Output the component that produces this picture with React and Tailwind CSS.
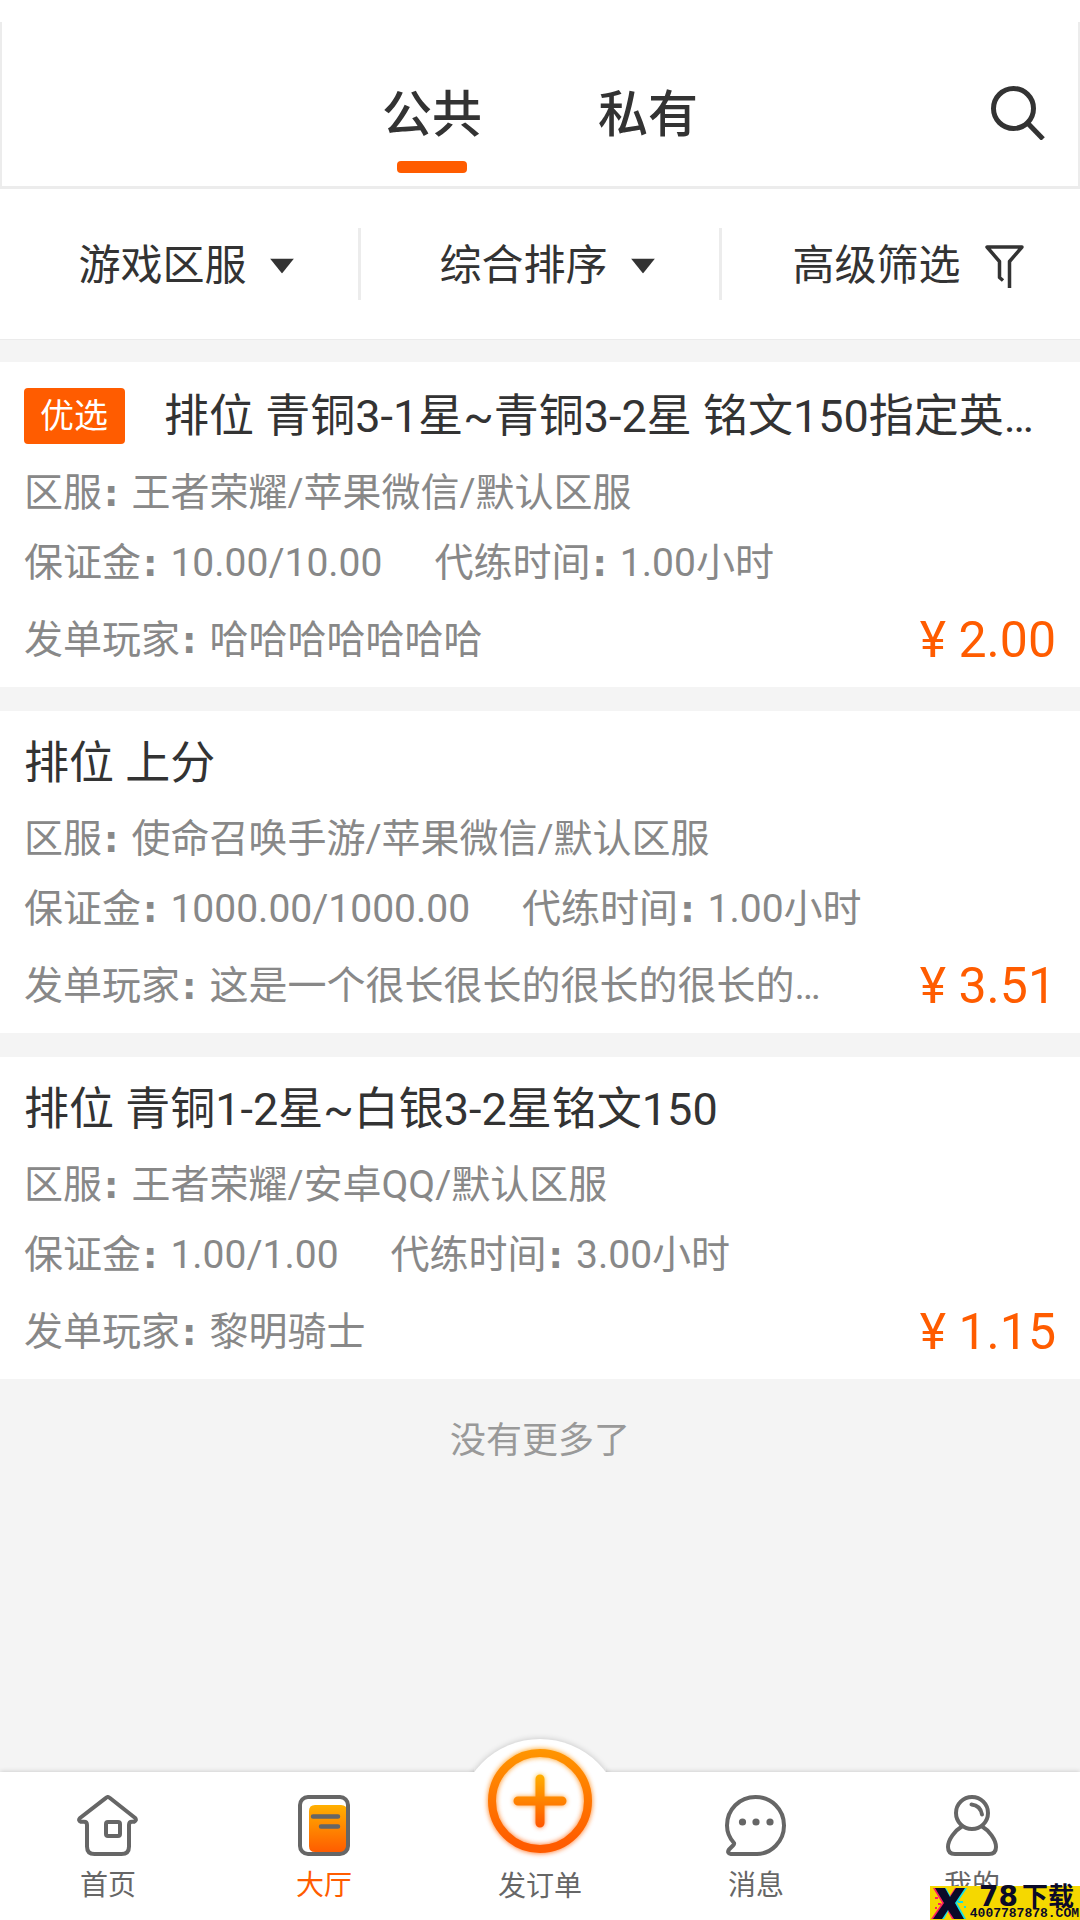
const orders = [
  {
    id: 1,
    featured: true,
    title: "排位 青铜3-1星~青铜3-2星 铭文150指定英…",
    region: "王者荣耀/苹果微信/默认区服",
    deposit: "10.00/10.00",
    time: "1.00小时",
    player: "哈哈哈哈哈哈哈",
    price: "2.00",
  },
  {
    id: 2,
    title: "排位 上分",
    region: "使命召唤手游/苹果微信/默认区服",
    deposit: "1000.00/1000.00",
    time: "1.00小时",
    player: "这是一个很长很长的很长的很长的…",
    price: "3.51",
  },
  {
    id: 3,
    title: "排位 青铜1-2星~白银3-2星铭文150",
    region: "王者荣耀/安卓QQ/默认区服",
    deposit: "1.00/1.00",
    time: "3.00小时",
    player: "黎明骑士",
    price: "1.15",
  },
];

function SearchIcon() {
  return (
    <svg className="size-[54px]" viewBox="0 0 54 54" fill="none" stroke="#333" strokeWidth="5">
      <circle cx="22.5" cy="22.5" r="20" />
      <path d="M37 37.5L52 53" />
    </svg>
  );
}

function FunnelIcon() {
  return (
    <svg className="h-[43px] w-[39px]" viewBox="0 0 39 43" fill="none" stroke="#333" strokeWidth="3.5">
      <path d="M18 35.5L14.5 32.5V16.5L2 2H37L24.5 16.5V43" strokeLinejoin="round" />
    </svg>
  );
}

function HomeIcon() {
  return (
    <svg className="h-[61px] w-[62px]" viewBox="0 0 62 61" fill="none" stroke="#666" strokeWidth="4" strokeLinejoin="round">
      <path d="M29 2.8Q30.8 1.3 32.6 2.8L58.2 23Q60 25.5 57 26.8H55Q52 26.8 52 30V51.5Q52 59 44.5 59H17.5Q10 59 10 51.5V30Q10 26.8 7 26.8H4Q0.8 25.5 3 23Z" />
      <rect x="29" y="27" width="14" height="14" rx="2" />
    </svg>
  );
}

function HallIcon() {
  return (
    <svg className="h-[61px] w-[52px]" viewBox="0 0 52 61" fill="none">
      <defs>
        <linearGradient id="hall-page" x1="0" y1="0" x2="0" y2="1">
          <stop offset="0" stopColor="#ffb000" />
          <stop offset="1" stopColor="#ff5c00" />
        </linearGradient>
      </defs>
      <path d="M17 10H43Q49 10 49 16V57H17Q11 57 11 51V16Q11 10 17 10Z" fill="url(#hall-page)" />
      <rect x="2" y="2" width="48" height="57" rx="8" stroke="#666" strokeWidth="4" />
      <path d="M15 21.5H40M23 31.5H40" stroke="#666" strokeWidth="4.5" strokeLinecap="round" />
    </svg>
  );
}

function MessageIcon() {
  return (
    <svg className="h-[61px] w-[62px]" viewBox="0 0 62 61" fill="none">
      <path
        d="M9 48C4.5 43 2 37 2 30.5C2 14.5 14.5 2 30.5 2S59 14.5 59 30.5S46 59 32 59H6Q1.5 58 4 54.5L8 50.5Q9.5 49 9 48Z"
        stroke="#666"
        strokeWidth="4"
        strokeLinejoin="round"
      />
      <g fill="#666">
        <circle cx="17.5" cy="27" r="3.6" />
        <circle cx="31" cy="27" r="3.6" />
        <circle cx="45" cy="27" r="3.6" />
      </g>
    </svg>
  );
}

function MineIcon() {
  return (
    <svg className="h-[61px] w-[52px]" viewBox="0 0 52 61" fill="none" stroke="#666" strokeWidth="4">
      <circle cx="26" cy="18" r="16" />
      <path d="M25.5 9.5Q34.5 10.5 36 19.5" strokeLinecap="round" />
      <path d="M16.5 31C9 35.5 2 44.5 2 52Q2 59 9 59H43Q50 59 50 52C50 44.5 43 35.5 35.5 31" />
    </svg>
  );
}

function PublishIcon() {
  return (
    <svg className="size-[120px]" viewBox="0 0 120 120" fill="none">
      <defs>
        <linearGradient id="publish" gradientUnits="userSpaceOnUse" x1="0" y1="8" x2="0" y2="112">
          <stop offset="0" stopColor="#ff9600" />
          <stop offset="0.9" stopColor="#ff5c00" />
        </linearGradient>
        <linearGradient id="publish-plus" gradientUnits="userSpaceOnUse" x1="0" y1="33" x2="0" y2="87">
          <stop offset="0" stopColor="#ffb000" />
          <stop offset="1" stopColor="#ff5500" />
        </linearGradient>
        <filter id="publish-glow" x="-20%" y="-20%" width="140%" height="140%">
          <feGaussianBlur stdDeviation="2.5" />
        </filter>
      </defs>
      <g filter="url(#publish-glow)" opacity="0.8" strokeWidth="9" strokeLinecap="round">
        <circle cx="60" cy="60" r="48" stroke="url(#publish)" />
        <path d="M60 38V82M38 60H82" stroke="url(#publish-plus)" />
      </g>
      <circle cx="60" cy="60" r="48" stroke="url(#publish)" strokeWidth="8" />
      <path d="M60 38V82M38 60H82" stroke="url(#publish-plus)" strokeWidth="9" strokeLinecap="round" />
    </svg>
  );
}

function Tab({ active, children }) {
  return (
    <button type="button" role="tab" aria-selected={active} className="flex w-[216px] flex-col items-center gap-4">
      <span className="text-[50px] leading-[60px] font-medium">{children}</span>
      <span className={active ? "h-3 w-[70px] rounded-[4px] bg-[#ff5c00]" : "h-3 w-[70px]"} />
    </button>
  );
}

function FilterSelect({ name }) {
  return (
    <div className="flex h-[72px] flex-1 items-center justify-center border-r-[3px] border-[#ececec] pt-1 pl-[14px]">
      <div className="relative">
        <select aria-label={name} className="block appearance-none bg-transparent pr-[46px] text-[42px] leading-[60px]">
          <option>{name}</option>
        </select>
        <svg className="pointer-events-none absolute top-1/2 right-0 h-[15px] w-6 -translate-y-1/2" viewBox="0 0 24 15" fill="#333">
          <path d="M0 0H24L12 15Z" />
        </svg>
      </div>
    </div>
  );
}

function Field({ label, children }) {
  return (
    <span className="whitespace-nowrap">
      {label}
      <span className="mr-[13px] ml-0.5 font-['DejaVu_Sans',sans-serif] text-[36px] leading-none font-bold">:</span>
      {children}
    </span>
  );
}

function OrderCard({ order }) {
  return (
    <article className="bg-white px-6 pt-6 pb-[23px] text-[39px] leading-[48px] text-[#888]">
      <div className="flex items-center">
        {order.featured && (
          <span className="mt-0.5 mr-[39px] mb-[3px] shrink-0 rounded-[4px] bg-[#ff5c00] pr-[17px] pl-4 text-[34px] leading-[56px] text-white">
            优选
          </span>
        )}
        <h2 className="truncate text-[45px] leading-[58px] text-[#333]">{order.title}</h2>
      </div>
      <p className="mt-[22px]">
        <Field label="区服">{order.region}</Field>
      </p>
      <p className="mt-[22px] flex gap-[52px]">
        <Field label="保证金">{order.deposit}</Field>
        <Field label="代练时间">{order.time}</Field>
      </p>
      <div className="mt-[29px] flex items-center justify-between">
        <p><Field label="发单玩家">{order.player}</Field></p>
        <strong className="text-[50px] font-normal whitespace-nowrap text-[#ff5c00]">¥ {order.price}</strong>
      </div>
    </article>
  );
}

function NavItem({ icon, label, active }) {
  return (
    <a href="#" className={active ? "flex flex-1 flex-col items-center pt-7 text-[#ff5c00]" : "flex flex-1 flex-col items-center pt-7"}>
      {icon}
      <span className="mt-2.5 text-[28px] leading-[40px]">{label}</span>
    </a>
  );
}

function SiteBadge() {
  return (
    <div className="absolute right-0 bottom-0 flex h-[34px] w-[150px] bg-[#f5d800] text-[#0a0a28]">
      <svg className="h-[34px] w-[38px] shrink-0" viewBox="0 0 38 34">
        <path d="M3 2H13L19 11L25 2H34L24 17L33 33H22L17 24L11 33H1L12 17Z" fill="#ff2060" />
        <path d="M7 2H16L21 11L28 2H37L27 17L36 33H25L19 24L14 33H5L15 17Z" fill="#10e0e8" />
        <path d="M5 2H15L20 11L26 2H35L25 17L34 33H24L18 24L12 33H3L14 17Z" fill="#0a0a28" />
        <path d="M5 11H8V13H5ZM8 17H11V19H8ZM5 21H7V23H5Z" fill="#ff2060" />
        <path d="M28 15H33V17H28ZM34 20H36V22H34Z" fill="#10e0e8" />
      </svg>
      <div className="flex flex-1 flex-col items-end whitespace-nowrap">
        <span className="flex items-center gap-1 pr-1.5 text-[26px] leading-[22px] font-bold">
          <span className="font-['DejaVu_Sans',sans-serif] text-[28px]">78</span>
          下载
        </span>
        <span className="pr-px font-['Liberation_Mono',monospace] text-[13px] leading-[12px] font-bold">4007787878.COM</span>
      </div>
    </div>
  );
}

function BottomNav() {
  return (
    <nav className="relative mt-auto flex h-[153px] text-[#666]">
      {/* Raised dome sits behind the bar, its lower half hidden by it */}
      <div className="absolute top-[-28px] left-1/2 size-[164px] -translate-x-1/2 rounded-full bg-white shadow-[0_0_6px_rgba(0,0,0,0.2)]" />
      <div className="absolute inset-x-0 top-[5px] bottom-0 bg-white shadow-[0_0_5px_rgba(0,0,0,0.2)] [clip-path:polygon(0_-8px,calc(50%-66px)_-8px,calc(50%-66px)_0,calc(50%+66px)_0,calc(50%+66px)_-8px,100%_-8px,100%_100%,0_100%)]" />
      <div className="relative flex flex-1">
        <NavItem icon={<HomeIcon />} label="首页" />
        <NavItem icon={<HallIcon />} label="大厅" active />
        <a href="#" className="-mt-[26px] flex flex-1 flex-col items-center">
          <PublishIcon />
          <span className="mt-1.5 text-[28px] leading-[40px]">发订单</span>
        </a>
        <NavItem icon={<MessageIcon />} label="消息" />
        <NavItem icon={<MineIcon />} label="我的" />
      </div>
      <SiteBadge />
    </nav>
  );
}

export default function App() {
  return (
    <div className="flex min-h-screen flex-col bg-[#f4f4f4] font-['Roboto','Noto_Sans_CJK_SC',sans-serif] text-[#333]">
      <div className="bg-white pt-[22px]">
        <header className="grid h-[167px] grid-cols-[1fr_auto_1fr] items-end border-x-2 border-b-[3px] border-[#ececec]">
          <div role="tablist" className="col-start-2 flex pb-[13px]">
            <Tab active>公共</Tab>
            <Tab>私有</Tab>
          </div>
          <button type="button" aria-label="搜索" className="mr-[33px] mb-[46px] justify-self-end">
            <SearchIcon />
          </button>
        </header>
      </div>

      <div className="flex border-b border-[#ebebeb] bg-white py-[39px]">
        <FilterSelect name="游戏区服" />
        <FilterSelect name="综合排序" />
        <div className="flex h-[72px] flex-1 items-center justify-center pt-1 pl-[14px]">
          <button type="button" className="flex items-center gap-6 text-[42px] leading-[60px]">
            高级筛选
            <FunnelIcon />
          </button>
        </div>
      </div>

      <main className="mt-[22px] flex flex-col gap-6">
        {orders.map((order) => (
          <OrderCard key={order.id} order={order} />
        ))}
      </main>
      <p className="pt-[37px] pb-9 text-center text-[36px] leading-[50px] text-[#999]">没有更多了</p>

      <BottomNav />
    </div>
  );
}
